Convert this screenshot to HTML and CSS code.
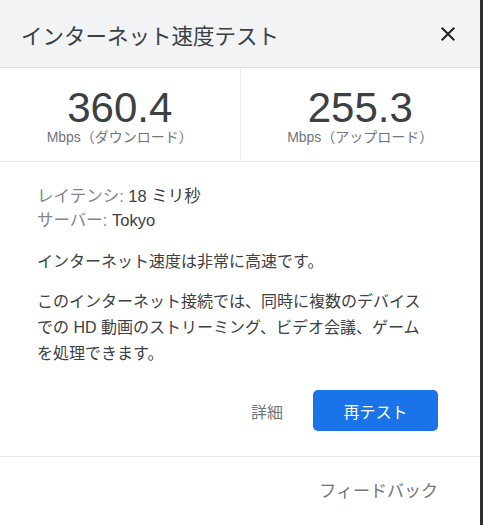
FILE: index.html
```html
<!DOCTYPE html>
<html lang="ja">
<head>
  <meta charset="UTF-8">
  <meta name="viewport" content="width=device-width, initial-scale=1.0">
  <title>インターネット速度テスト</title>
  <link rel="stylesheet" href="styles.css">
</head>
<body>
  <div class="panel">
    <!-- Header -->
    <div class="header">
      <span class="title">インターネット速度テスト</span>
      <button class="close" aria-label="閉じる">
        <svg width="24" height="24" viewBox="0 0 24 24"><path d="M19 6.41L17.59 5 12 10.59 6.41 5 5 6.41 10.59 12 5 17.59 6.41 19 12 13.41 17.59 19 19 17.59 13.41 12z" fill="#202124"/></svg>
      </button>
    </div>

    <!-- Results -->
    <div class="stats">
      <div class="stat">
        <div class="value">360.4</div>
        <div class="unit">Mbps（ダウンロード）</div>
      </div>
      <div class="stat">
        <div class="value">255.3</div>
        <div class="unit">Mbps（アップロード）</div>
      </div>
    </div>

    <div class="content">
      <div class="info">
        <div>レイテンシ: <span class="dark">18 ミリ秒</span></div>
        <div>サーバー: <span class="dark">Tokyo</span></div>
      </div>
      <p class="summary">インターネット速度は非常に高速です。</p>
      <p class="detail">このインターネット接続では、同時に複数のデバイスでの HD 動画のストリーミング、ビデオ会議、ゲームを処理できます。</p>
      <div class="actions">
        <a class="link" href="#">詳細</a>
        <button class="retest">再テスト</button>
      </div>
    </div>

    <div class="footer">
      <a class="link feedback" href="#">フィードバック</a>
    </div>
  </div>
</body>
</html>
```

FILE: styles.css
```css
body {
  margin: 0;
  background: #2e2e2e;
  font-family: "Liberation Sans", Arial, "Noto Sans CJK JP", sans-serif;
}
.panel {
  width: 480px;
  height: 525px;
  background: #fff;
  color: #3c4043;
}
.header {
  height: 67px;
  border-bottom: 1px solid #dadce0;
  background: #f1f3f4;
  display: flex;
  align-items: center;
  justify-content: space-between;
  padding: 0 20px 0 21px;
}
.title {
  font-size: 21.5px;
  line-height: 30px;
  margin-top: 7px;
  color: #3c4043;
}
.close {
  border: none;
  background: none;
  padding: 0;
  width: 24px;
  height: 24px;
  cursor: pointer;
}
.close svg { display: block; }

/* Results */
.stats {
  display: flex;
  height: 93px;
  border-bottom: 1px solid #ebebeb;
}
.stat {
  flex: 1;
  text-align: center;
  padding-top: 19px;
}
.stat + .stat { border-left: 1px solid #eeeeee; }
.value {
  font-size: 42px;
  line-height: 42px;
  color: #3c4043;
}
.unit {
  font-size: 14px;
  line-height: 16px;
  color: #70757a;
}

.content {
  padding: 22px 50px 25px 37px;
  border-bottom: 1px solid #ebebeb;
}
.info {
  font-size: 16.5px;
  line-height: 24px;
  color: #80868b;
  margin-bottom: 17px;
}
.info .dark { color: #3c4043; }
.summary,
.detail {
  margin: 0 0 14px;
  font-size: 16px;
  line-height: 26px;
}
.actions {
  display: flex;
  justify-content: flex-end;
  align-items: center;
  gap: 30px;
  margin-top: 23px;
  margin-right: -8px;
}
.link {
  color: #70757a;
  font-size: 16px;
  text-decoration: none;
}
.feedback { font-size: 17px; }
.retest {
  width: 125px;
  height: 41px;
  border: none;
  border-radius: 5px;
  background: #1a73e8;
  color: #fff;
  font-family: inherit;
  font-size: 16px;
  cursor: pointer;
}
.footer {
  display: flex;
  justify-content: flex-end;
  padding: 23px 42px 0 0;
  line-height: 24px;
}
```
